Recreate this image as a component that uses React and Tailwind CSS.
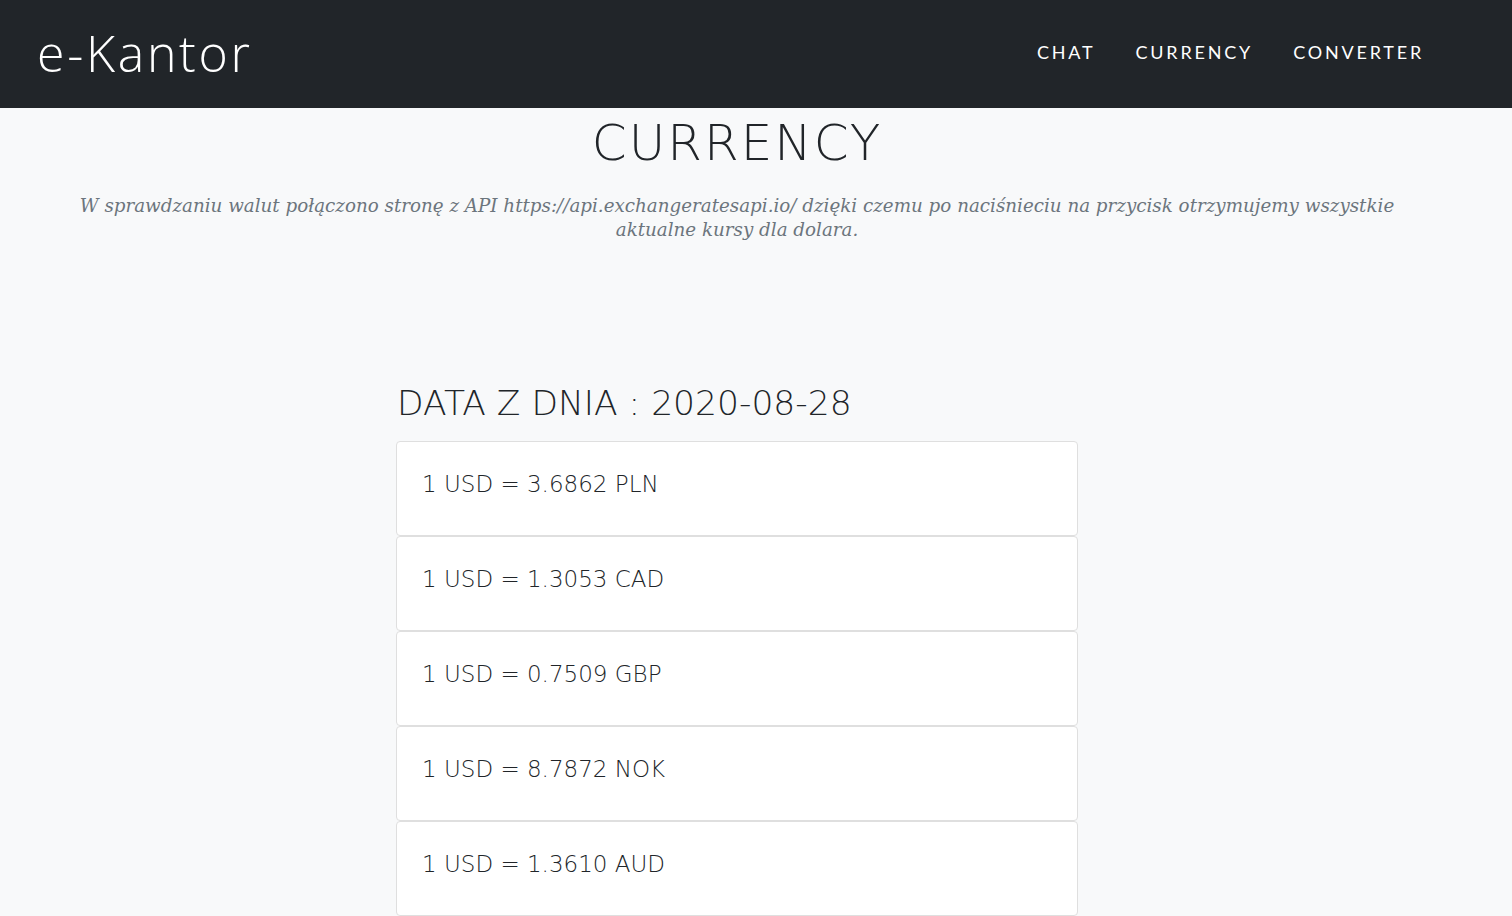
import React from "react";

const rates = [
  { code: "PLN", value: "3.6862" },
  { code: "CAD", value: "1.3053" },
  { code: "GBP", value: "0.7509" },
  { code: "NOK", value: "8.7872" },
  { code: "AUD", value: "1.3610" },
];

export default function App() {
  return (
    <div className="min-h-screen bg-[#f8f9fa] text-[#212529]">
      <nav className="h-[108px] bg-[#212529] flex items-center justify-between pl-[37px] pr-[88px]">
        <a className="text-white text-[50px] tracking-[2.7px] font-light leading-none -mt-[2px] font-['Open_Sans',sans-serif]">
          e-Kantor
        </a>
        <ul className="flex items-center gap-[40px] text-white text-[18px] tracking-[2.8px] -mt-[4px] font-['Lato',sans-serif]">
          <li>CHAT</li>
          <li>CURRENCY</li>
          <li>CONVERTER</li>
        </ul>
      </nav>

      <div className="w-[1474px] flex flex-col items-center font-['DejaVu_Sans','Noto_Sans',sans-serif]">
        <h1 className="text-[50px] font-light leading-none mt-[10px] tracking-[2px]">
          CURRENCY
        </h1>
        <p className="mt-[26px] px-[60px] text-center italic text-[#6c757d] text-[18.3px] leading-[24px] font-['DejaVu_Serif',serif]">
          W sprawdzaniu walut połączono stronę z API https://api.exchangeratesapi.io/ dzięki czemu po naciśnieciu na przycisk otrzymujemy wszystkie aktualne kursy dla dolara.
        </p>

        <div className="w-[682px] mt-[144px]">
          <h2 className="text-[34.5px] font-light leading-none pl-[1px]">
            DATA Z DNIA : 2020-08-28
          </h2>
          <ul className="mt-[20px]">
            {rates.map((r) => (
              <li
                key={r.code}
                className="h-[95px] bg-white border border-[#dfdfdf] rounded-[4px] px-[25px] pt-[27px] text-[23px] font-light leading-[30px]"
              >
                1 USD = {r.value} {r.code}
              </li>
            ))}
          </ul>
        </div>
      </div>
    </div>
  );
}
